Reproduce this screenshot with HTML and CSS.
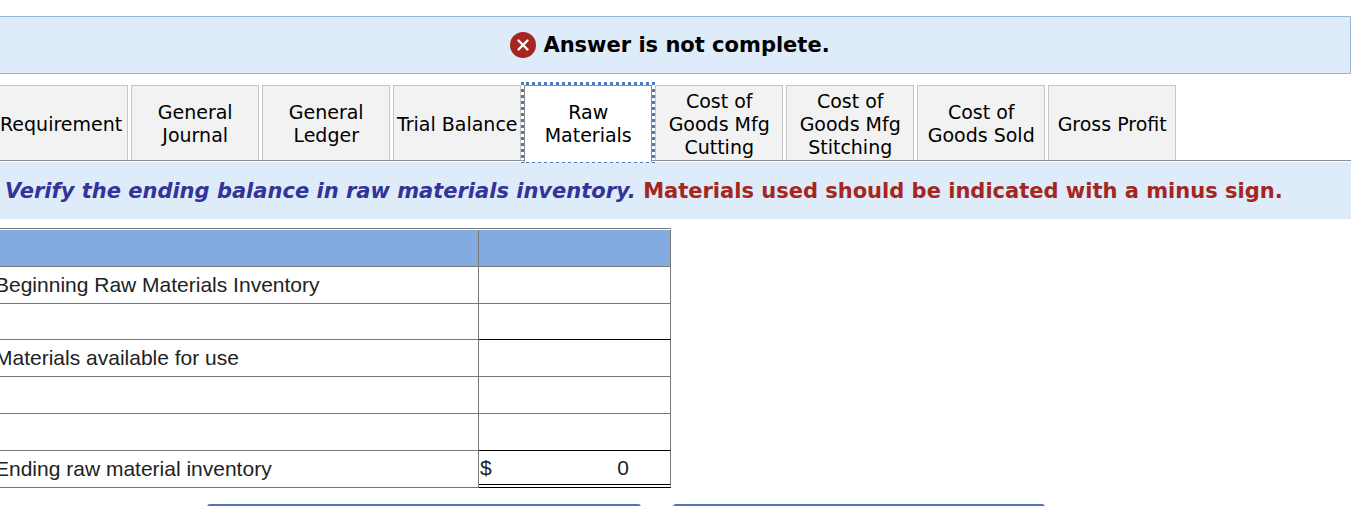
FILE: index.html
```html
<!DOCTYPE html>
<html lang="en">
<head>
    <meta charset="UTF-8">
    <meta name="viewport" content="width=device-width, initial-scale=1.0">
    <title>Raw Materials</title>
    <link rel="stylesheet" href="styles.css">
</head>
<body>
    <div class="page">
        <div class="answer-status">
            <svg class="status-icon" viewBox="0 0 26 26" aria-hidden="true">
                <circle cx="13" cy="13" r="13" fill="#a4261f"/>
                <path d="M8.5 8.5L17.5 17.5M17.5 8.5L8.5 17.5" stroke="#fff" stroke-width="2.4" stroke-linecap="round"/>
            </svg>
            <p>Answer is not complete.</p>
        </div>

        <div class="tab-bar">
            <div class="tabs" role="tablist">
                <button class="tab tab-first" role="tab">Requirement</button>
                <button class="tab" role="tab">General Journal</button>
                <button class="tab" role="tab">General Ledger</button>
                <button class="tab" role="tab">Trial Balance</button>
                <button class="tab active" role="tab" aria-selected="true">Raw Materials</button>
                <button class="tab" role="tab">Cost of Goods Mfg Cutting</button>
                <button class="tab" role="tab">Cost of Goods Mfg Stitching</button>
                <button class="tab" role="tab">Cost of Goods Sold</button>
                <button class="tab" role="tab">Gross Profit</button>
            </div>
        </div>

        <p class="instruction"><em>Verify the ending balance in raw materials inventory.</em> <strong>Materials used should be indicated with a minus sign.</strong></p>

        <table class="inventory">
            <thead>
                <tr><th class="label"></th><th></th></tr>
            </thead>
            <tbody>
                <tr><td>Beginning Raw Materials Inventory</td><td></td></tr>
                <tr class="before-subtotal"><td></td><td class="rule"></td></tr>
                <tr><td>Materials available for use</td><td></td></tr>
                <tr><td></td><td></td></tr>
                <tr><td></td><td class="rule"></td></tr>
                <tr>
                    <td>Ending raw material inventory</td>
                    <td class="total"><div class="amount"><span>$</span><span>0</span></div></td>
                </tr>
            </tbody>
        </table>

        <div class="nav-buttons">
            <button class="nav-btn prev" aria-label="Previous tab"></button>
            <button class="nav-btn next" aria-label="Next tab"></button>
        </div>
    </div>
</body>
</html>
```
FILE: styles.css
```css
*{
    margin: 0;
    padding: 0;
    box-sizing: border-box;
}
body{
    background: #fff;
    height: 100vh;
    overflow: hidden;
    font-family: Verdana, "DejaVu Sans", sans-serif;
    color: #000;
}
.page{
    padding: 16px 5px 0 0;
}
.answer-status{
    display: flex;
    justify-content: center;
    align-items: center;
    gap: 7px;
    height: 58px;
    padding-right: 10px;
    background: #deebf8;
    border: 1px solid #98b6da;
    border-left: 0;
    font-size: 21px;
    font-weight: bold;
}
.status-icon{
    width: 26px;
    height: 26px;
}

/* tabs */
.tab-bar{
    margin-top: 8px;
    padding: 3px 0 2px;
    overflow: hidden;
}
.tabs{
    display: flex;
    gap: 3px;
    height: 76px;
    margin-left: -1px;
    border-bottom: 1px solid #8e8e8e;
}
.tab{
    flex: 0 0 128px;
    height: 75px;
    padding-top: 2px;
    background: #f2f2f2;
    border: 1px solid #c4c4c4;
    border-bottom: 0;
    font-family: inherit;
    font-size: 19px;
    line-height: 23px;
    color: #000;
}
.tab-first{
    padding-right: 5px;
}
.tab.active{
    height: 77px;
    padding-top: 0;
    background: #fff;
    border-color: #8e8e8e;
    outline: 3px dotted #4b79bd;
}

.instruction{
    margin-top: -1px;
    padding: 18px 5px 16px;
    background: #deebf8;
    font-size: 21px;
    font-weight: bold;
    line-height: 23px;
}
.instruction em{
    color: #333399;
}
.instruction strong{
    color: #a4261f;
}

/* inventory table */
.inventory{
    width: 671px;
    margin-top: 9px;
    padding-top: 1px;
    border-top: 1px solid #777;
    border-spacing: 0;
    table-layout: fixed;
    font-family: Arial, "Liberation Sans", sans-serif;
    font-size: 21px;
    line-height: 23px;
    color: #222;
}
.inventory .label{
    width: 479px;
}
.inventory th,
.inventory td{
    height: 37px;
    padding-bottom: 1px;
    border-right: 1px solid #777;
    border-bottom: 1px solid #777;
    text-align: left;
}
.inventory th{
    background: #84abdf;
}
.inventory .before-subtotal td{
    height: 36px;
}
.inventory .rule{
    border-bottom-color: #000;
}
.inventory .total{
    padding-bottom: 0;
    border-bottom: 4px double #000;
}
.inventory td:first-child{
    text-indent: -5px;
}
.amount{
    display: flex;
    justify-content: space-between;
    padding: 0 41px 0 1px;
}

.nav-buttons{
    display: flex;
    gap: 32px;
    margin-top: 16px;
    padding-left: 207px;
}
.nav-btn{
    height: 44px;
    background: #4b79b7;
    border: 0;
    border-radius: 3px;
}
.prev{
    width: 434px;
}
.next{
    width: 372px;
}
```
